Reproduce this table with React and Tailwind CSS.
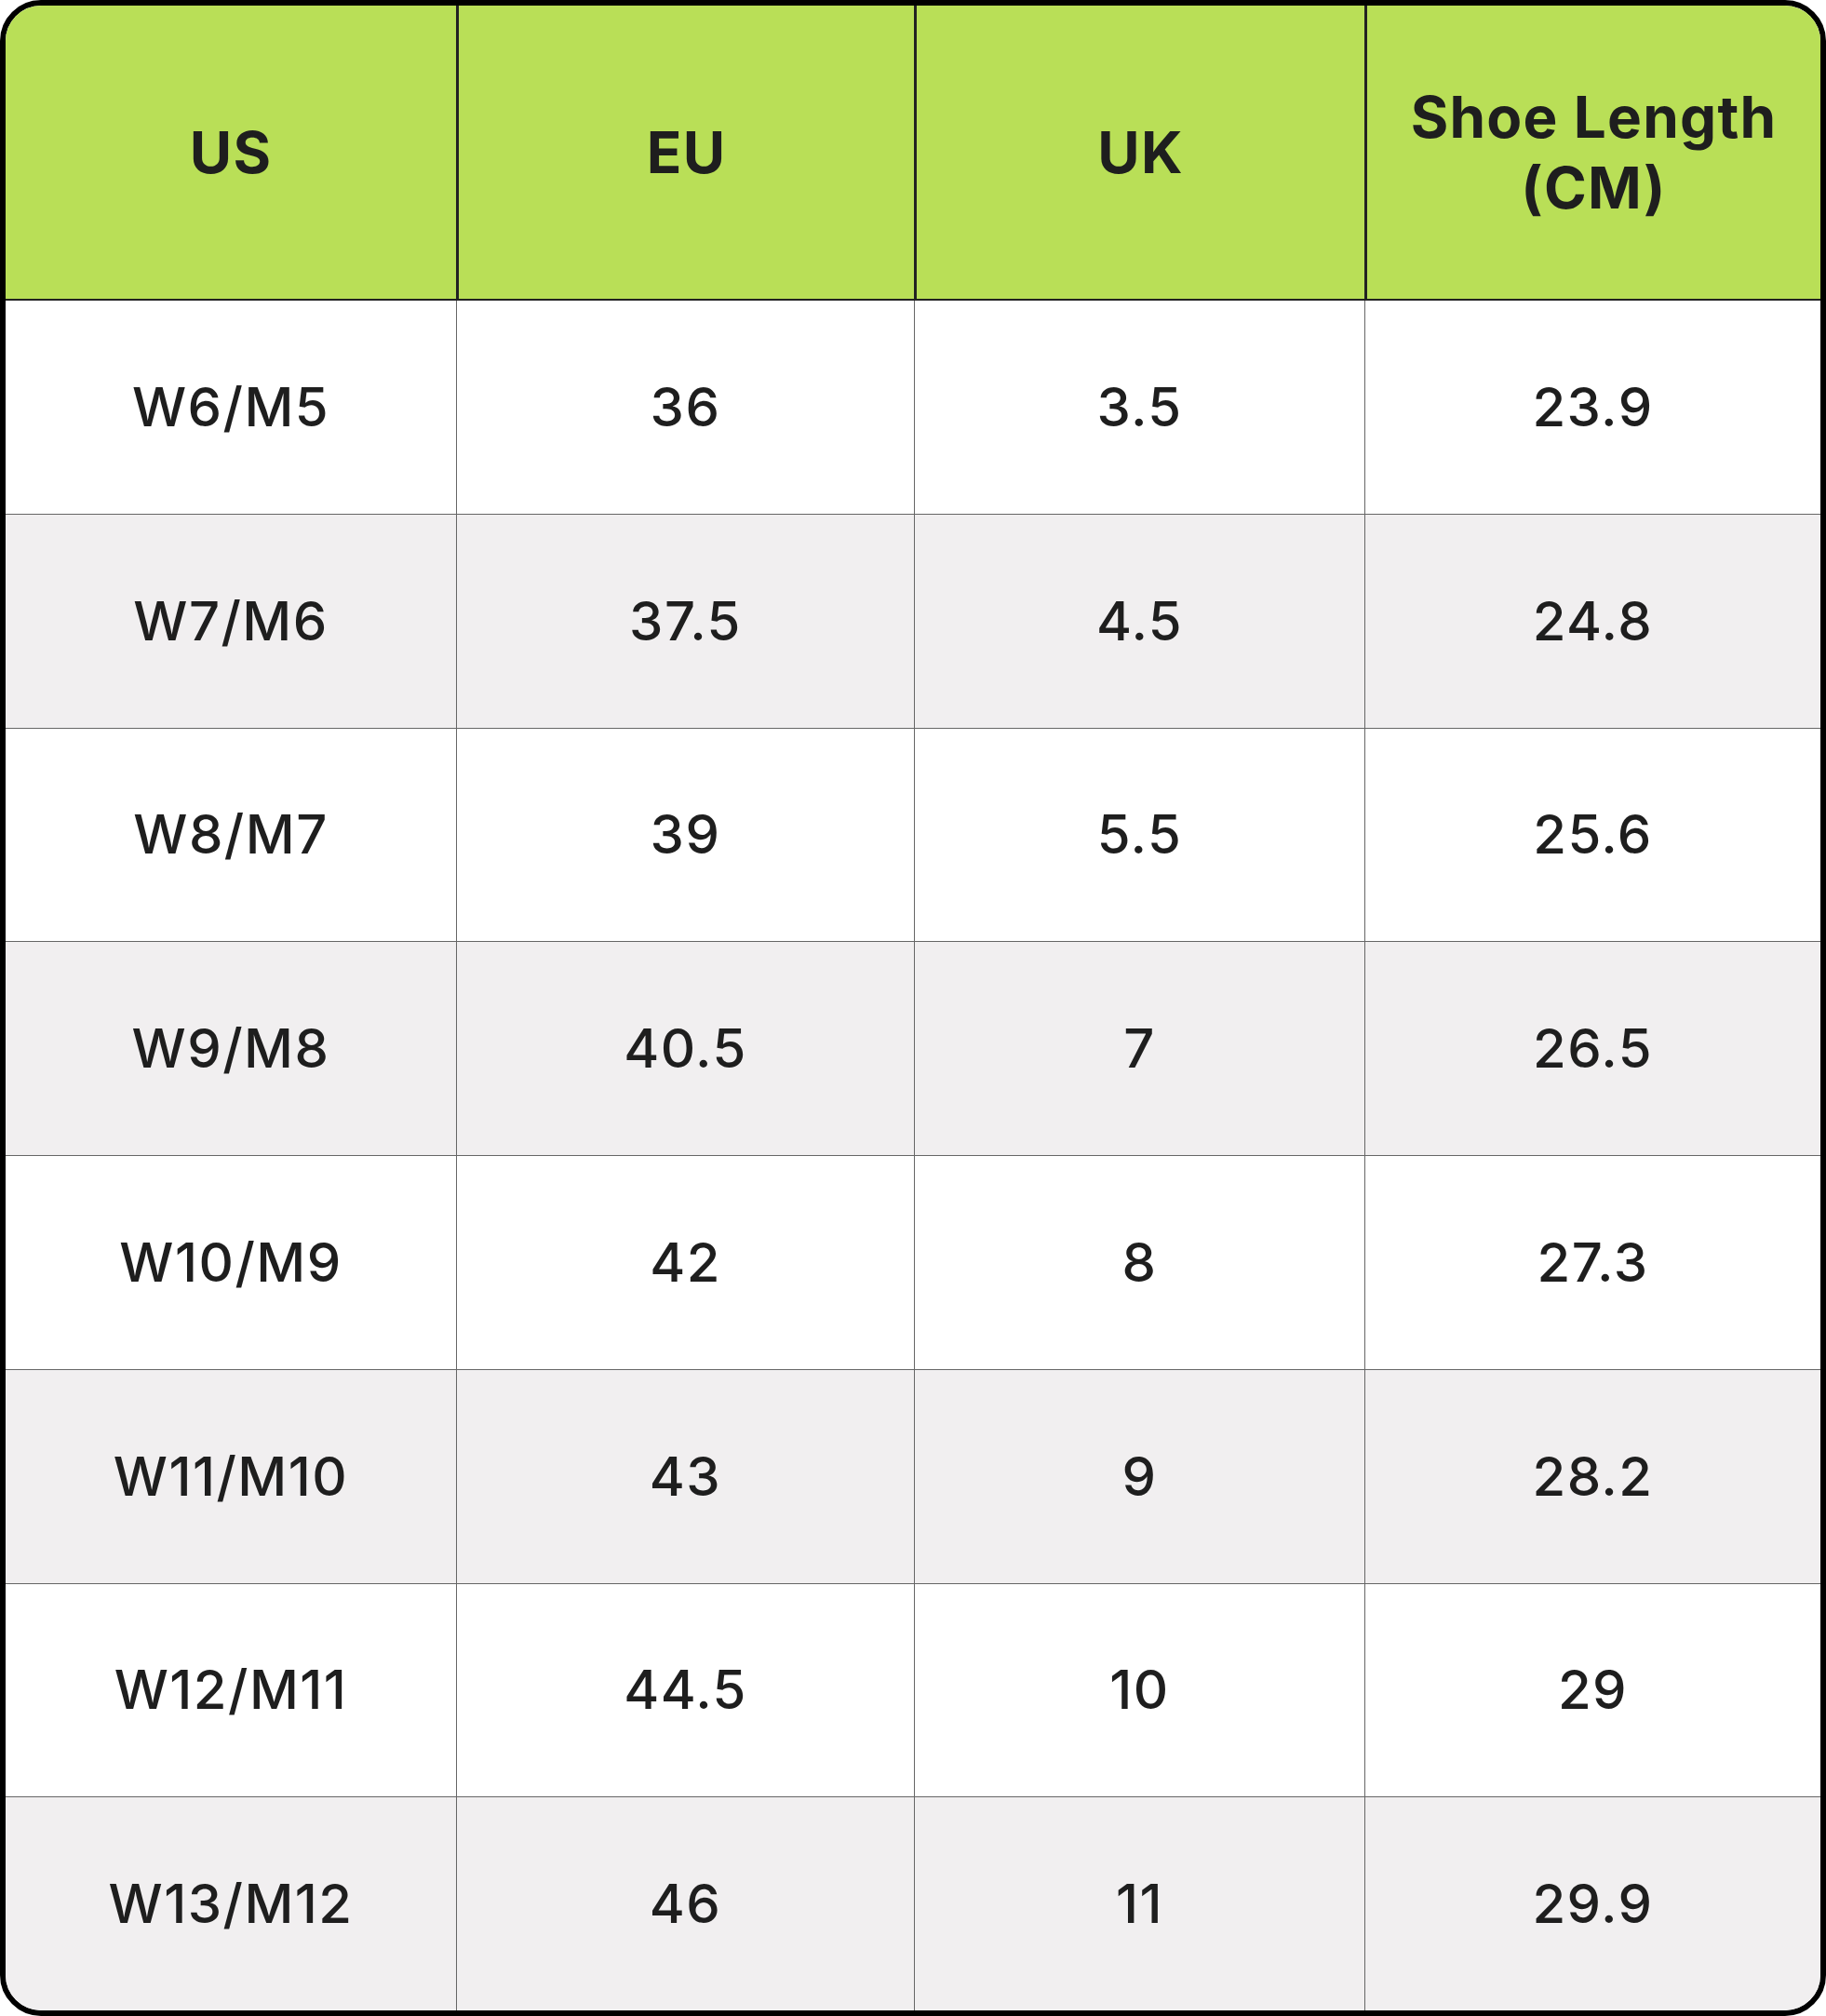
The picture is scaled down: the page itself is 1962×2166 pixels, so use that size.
const rows = [
  ["W6/M5", "36", "3.5", "23.9"],
  ["W7/M6", "37.5", "4.5", "24.8"],
  ["W8/M7", "39", "5.5", "25.6"],
  ["W9/M8", "40.5", "7", "26.5"],
  ["W10/M9", "42", "8", "27.3"],
  ["W11/M10", "43", "9", "28.2"],
  ["W12/M11", "44.5", "10", "29"],
  ["W13/M12", "46", "11", "29.9"],
];

export default function App() {
  return (
    <div className="w-[1962px] h-[2166px] bg-white" style={{ fontFamily: "Inter, 'Liberation Sans', sans-serif" }}>
      <div className="w-full h-full border-[6px] border-black rounded-[44px] overflow-hidden flex flex-col text-[#1e1e1e]">
        <div className="h-[317px] shrink-0 grid grid-cols-[484px_492px_484px_1fr] bg-[#b9df57] border-b-2 border-[#222]">
          {["US", "EU", "UK"].map((h, i) => (
            <div
              key={h}
              className={`flex items-center justify-center text-[62px] font-bold tracking-[0.02em] ${i > 0 ? "border-l-[3px] border-[#222]" : ""}`}
            >
              {h}
            </div>
          ))}
          <div className="flex items-center justify-center text-center text-[62px] font-bold leading-[76px] tracking-[0.02em] border-l-[3px] border-[#222]">
            <span>
              Shoe Length
              <br />
              (CM)
            </span>
          </div>
        </div>
        <div className="flex-1 flex flex-col">
          {rows.map((r, ri) => (
            <div
              key={ri}
              className={`flex-1 grid grid-cols-[484px_492px_484px_1fr] ${ri > 0 ? "border-t border-[#666]" : ""} ${ri % 2 === 1 ? "bg-[#f1eff0]" : "bg-white"}`}
            >
              {r.map((c, ci) => (
                <div
                  key={ci}
                  className={`flex items-center justify-center text-[58px] font-medium tracking-[0.025em] ${ci > 0 ? "border-l border-[#666]" : ""}`}
                >
                  {c}
                </div>
              ))}
            </div>
          ))}
        </div>
      </div>
    </div>
  );
}
